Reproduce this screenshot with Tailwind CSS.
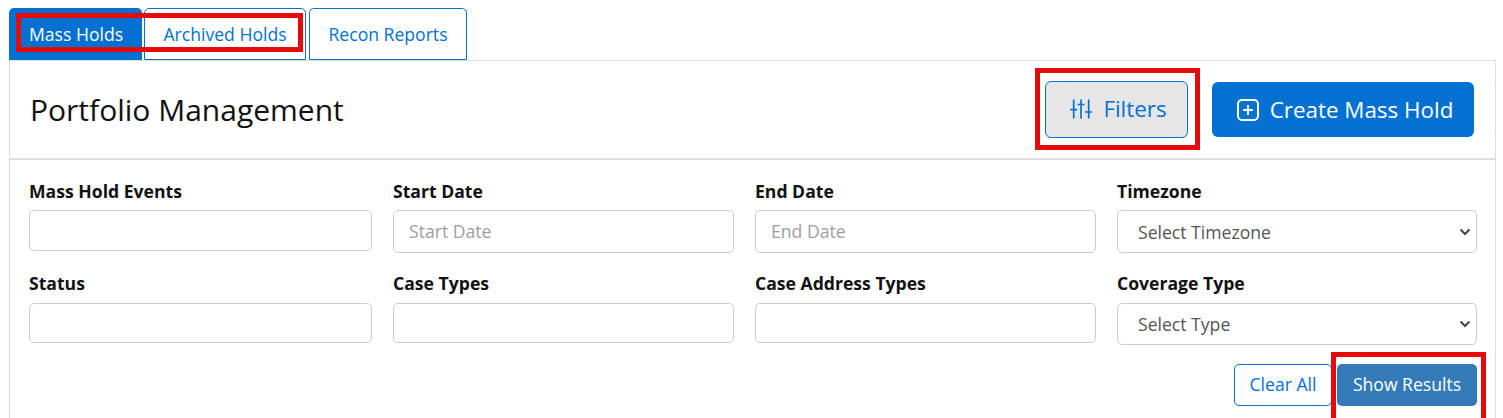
<!DOCTYPE html>
<html>
<head>
<meta charset="utf-8">
<script src="https://cdn.jsdelivr.net/npm/@tailwindcss/browser@4"></script>
</head>
<body class="bg-white font-['Open_Sans',sans-serif] overflow-hidden">
<div class="relative w-[1503px] h-[418px] overflow-hidden pt-[8px] pl-[9px] pr-[7px]">
  <div class="flex h-[52px] items-stretch text-[17.6px]">
    <div class="w-[133px] bg-[#0271d2] text-white rounded-t-[5px] pl-[20px] flex items-center">Mass Holds</div>
    <div class="ml-[2px] w-[162px] bg-white text-[#0271d2] border border-[#0271d2] rounded-t-[5px] flex items-center justify-center pt-[1px]">Archived Holds</div>
    <div class="ml-[3px] w-[158px] bg-white text-[#0271d2] border border-[#0271d2] rounded-t-[5px] flex items-center justify-center pt-[1px]">Recon Reports</div>
  </div>
  <div class="border-x border-t border-[#dedede] h-[360px]">
    <div class="h-[99px] border-b-2 border-[#dedede] flex items-center pl-[20px] pr-[21px]">
      <h1 class="text-[30px] text-[#111] flex-1">Portfolio Management</h1>
      <button class="w-[143px] h-[57px] mt-[-1px] pl-[4px] bg-[#e6e6e6] text-[#0271d2] border border-[#0271d2] rounded-[6px] flex items-center justify-center gap-[11px] text-[22.4px]">
        <svg class="w-[22px] h-[22px]" viewBox="0 0 22 22" fill="none" stroke="currentColor" stroke-width="1.7"><path d="M3.7 1.5v19M0.3 11.7h7M11 1.5v19M7.5 6.5h7M18.7 1.5v19M15 14h7"/></svg>
        <span>Filters</span>
      </button>
      <button class="ml-[24px] w-[262px] h-[55px] pl-[4px] bg-[#0271d2] text-white rounded-[6px] flex items-center justify-center gap-[11px] text-[22.4px]">
        <svg class="w-[22px] h-[22px]" viewBox="0 0 22 22" fill="none" stroke="currentColor" stroke-width="2"><rect x="1" y="1" width="20" height="20" rx="4"/><path d="M11 6v10M6 11h10"/></svg>
        <span>Create Mass Hold</span>
      </button>
    </div>
    <div class="pl-[19px] pr-[18px] pt-[21px] grid grid-cols-[343px_341px_341px_360px] gap-x-[21px] text-[#666]">
      <div class="h-[93px]">
        <label class="block h-[29px] text-[17.6px] font-bold text-[#111] leading-[20px]">Mass Hold Events</label>
        <div class="h-[41px] border border-[#ccc] rounded-[5px]"></div>
      </div>
      <div class="h-[93px]">
        <label class="block h-[29px] text-[17.6px] font-bold text-[#111] leading-[20px]">Start Date</label>
        <div class="h-[43px] border border-[#ccc] rounded-[5px] flex items-center pl-[15px] text-[#9e9e9e] text-[17.6px]">Start Date</div>
      </div>
      <div class="h-[93px]">
        <label class="block h-[29px] text-[17.6px] font-bold text-[#111] leading-[20px]">End Date</label>
        <div class="h-[43px] border border-[#ccc] rounded-[5px] flex items-center pl-[15px] text-[#9e9e9e] text-[17.6px]">End Date</div>
      </div>
      <div class="h-[93px]">
        <label class="block h-[29px] text-[17.6px] font-bold text-[#111] leading-[20px]">Timezone</label>
        <div class="h-[43px] border border-[#ccc] rounded-[5px] flex items-center pl-[20px] pr-[5px] justify-between text-[#555] text-[17.6px]"><span class="pt-[2px]">Select Timezone</span><svg class="w-[12px] h-[8px]" viewBox="0 0 12 8" fill="none" stroke="#444" stroke-width="2"><path d="M1.5 1.5 6 6l4.5-4.5"/></svg></div>
      </div>
      <div>
        <label class="block h-[29px] text-[17.6px] font-bold text-[#111] leading-[18px]">Status</label>
        <div class="h-[40px] border border-[#ccc] rounded-[5px]"></div>
      </div>
      <div>
        <label class="block h-[29px] text-[17.6px] font-bold text-[#111] leading-[18px]">Case Types</label>
        <div class="h-[40px] border border-[#ccc] rounded-[5px]"></div>
      </div>
      <div>
        <label class="block h-[29px] text-[17.6px] font-bold text-[#111] leading-[18px]">Case Address Types</label>
        <div class="h-[40px] border border-[#ccc] rounded-[5px]"></div>
      </div>
      <div>
        <label class="block h-[29px] text-[17.6px] font-bold text-[#111] leading-[18px]">Coverage Type</label>
        <div class="h-[42px] border border-[#ccc] rounded-[5px] flex items-center pl-[20px] pr-[5px] justify-between text-[#555] text-[17.6px]"><span>Select Type</span><svg class="w-[12px] h-[8px]" viewBox="0 0 12 8" fill="none" stroke="#444" stroke-width="2"><path d="M1.5 1.5 6 6l4.5-4.5"/></svg></div>
      </div>
    </div>
    <div class="flex justify-end pr-[18px] mt-[19px] text-[17.6px]">
      <button class="w-[98px] h-[42px] pb-[2px] border border-[#0271d2] text-[#0271d2] rounded-[5px] bg-white">Clear All</button>
      <button class="ml-[5px] w-[140px] h-[42px] pb-[2px] bg-[#337ab7] text-white rounded-[5px]">Show Results</button>
    </div>
  </div>
  <div class="absolute left-[16px] top-[13px] w-[287px] h-[39px] border-[5px] border-[#e60a0a]"></div>
  <div class="absolute left-[1035px] top-[68px] w-[165px] h-[82px] border-[5px] border-[#e60a0a]"></div>
  <div class="absolute left-[1331px] top-[352px] w-[155px] h-[80px] border-[5px] border-[#e60a0a]"></div>
</div>
</body>
</html>
